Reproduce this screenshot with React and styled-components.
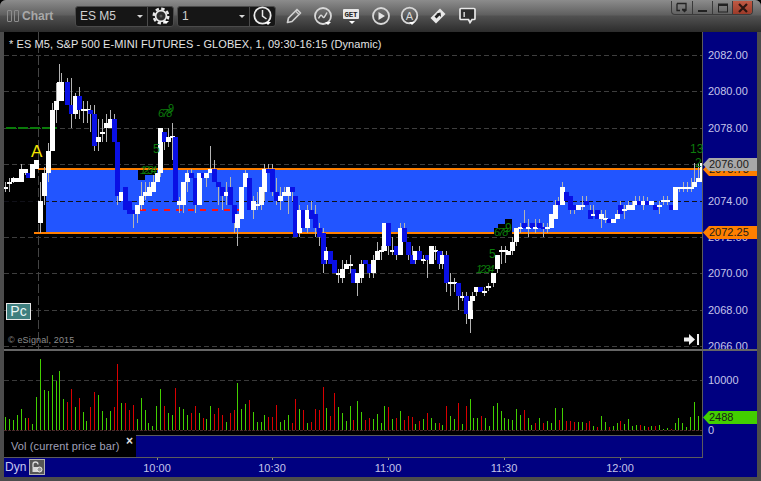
import React from "react";
import styled, { createGlobalStyle } from "styled-components";

const Global = createGlobalStyle`
  html, body { margin: 0; padding: 0; background: #000; }
  * { box-sizing: border-box; }
  body { font-family: "Liberation Sans", Arial, sans-serif; }
`;

const NAVY = "#000080";
const AXIS_TEXT = "#c4c4ea";

const Window = styled.div`
  width: 761px; height: 481px; display: flex; flex-direction: column;
  background: #4c4c4c; border-radius: 6px 6px 0 0; overflow: hidden;
`;
const TitleBar = styled.div`
  height: 32px; flex: none; display: flex; align-items: center; padding-left: 7px;
  background: linear-gradient(to bottom, #8c8c8c 0, #5f5f5f 15px, #515151 16px, #2c2c2c 32px);
`;
const Grip = styled.div`
  display: flex; gap: 2px; margin-right: 3px;
`;
const GripBar = styled.span`
  width: 5px; height: 12px; border: 1px solid #8d8d8d; border-radius: 1px; display: block;
`;
const AppName = styled.div`
  color: #a8a8a8; font-size: 12px; font-weight: bold; width: 53px;
`;
const ComboGroup = styled.div`
  display: flex; height: 21px; margin-right: 3px; background: #161616;
  border: 1px solid #4b4b4b; border-radius: 3px; align-items: stretch;
`;
const Combo = styled.div`
  width: 72px; display: flex; align-items: center; justify-content: space-between;
  padding: 0 4px 0 4px; color: #d0d0d0; font-size: 12px; border-right: 1px solid #4b4b4b;
`;
const ComboCaret = styled.span`
  width: 0; height: 0; border-left: 3px solid transparent; border-right: 3px solid transparent;
  border-top: 3px solid #d8d8d8;
`;
const ComboButton = styled.div`
  width: 25px; display: flex; align-items: center; justify-content: center;
`;
const ToolRow = styled.div`
  display: flex; align-items: center;
`;
const Tool = styled.div`
  width: 29px; height: 24px; display: flex; align-items: center; justify-content: center;
`;
const WindowControls = styled.div`
  display: flex; margin-left: auto; margin-right: 8px; align-self: flex-start; margin-top: 1px;
  height: 14px; border: 1px solid #3a3a3a; border-top: none; border-radius: 0 0 4px 4px; overflow: hidden;
`;
const WinButton = styled.div`
  width: 20px; display: flex; align-items: center; justify-content: center;
  border-left: ${(p) => (p.$first ? "none" : "1px solid #3a3a3a")};
  background: ${(p) => (p.$close ? "linear-gradient(#c05a44, #9c3b2a)" : "transparent")};
`;
const Main = styled.div`
  flex: 1; margin: 0 4px 4px; display: flex; flex-direction: column; min-height: 0;
`;
const PaneRow = styled.div`
  display: flex; height: ${(p) => p.$h}px; flex: none;
`;
const Plot = styled.div`
  width: 699px; position: relative; background: #000; border-right: 1px solid #5c5c5c;
  svg { display: block; position: absolute; left: 0; top: 0; }
`;
const Axis = styled.div`
  flex: 1; background: ${NAVY}; position: relative; overflow: hidden;
`;
const AxisLabel = styled.div`
  position: absolute; left: 5px; transform: translateY(-50%);
  color: ${AXIS_TEXT}; font-size: 11px; line-height: 13px;
`;
const Tag = styled.div`
  position: absolute; left: 0; right: 0; height: 13px; padding-left: 6px;
  background: ${(p) => p.$bg}; color: #1a1a1a; font-size: 11px; line-height: 13px;
  clip-path: polygon(0 50%, 6px 0, 100% 0, 100% 100%, 6px 100%);
`;
const Divider = styled.div`
  height: 2px; flex: none; background: #666;
`;
const Title = styled.div`
  position: absolute; left: 5px; top: 6px; color: #e4e4e4; font-size: 11px; line-height: 13px;
  white-space: nowrap; letter-spacing: 0.08px;
`;
const PcBadge = styled.div`
  position: absolute; left: 2px; top: 271px; width: 25px; height: 17px;
  background: #3f7f7f; border: 1px solid #e8e8e8; color: #eaf6f6; font-size: 14px;
  line-height: 15px; text-align: center;
`;
const Copyright = styled.div`
  position: absolute; left: 4px; top: 302px; color: #8c8c8c; font-size: 9px; line-height: 12px; letter-spacing: 0.15px;
`;
const LegendRow = styled.div`
  display: flex; height: 22px; flex: none; background: ${NAVY};
`;
const LegendTab = styled.div`
  width: 132px; background: #000; color: #a0a0b8; font-size: 11px; letter-spacing: 0.12px; display: flex;
  align-items: center; padding: 0 0 0 7px; position: relative; white-space: nowrap;
`;
const LegendClose = styled.span`
  position: absolute; left: 122px; top: 0; color: #e0e0e0; font-size: 12px; font-weight: bold; line-height: 12px;
`;
const LegendFill = styled.div`
  width: 567px; border-top: 1px solid #5c5c5c; border-right: 1px solid #5c5c5c;
`;
const TimeRow = styled.div`
  height: 20px; flex: none; background: ${NAVY}; display: flex; align-items: center; position: relative;
`;
const TimeRule = styled.div`
  position: absolute; left: 0; top: 0; width: 699px; height: 1px; background: #5c5c5c;
`;
const Dyn = styled.div`
  color: #c8c8f0; font-size: 12px; font-weight: normal; margin-left: 1px; width: 24px;
`;
const LockBox = styled.div`
  width: 16px; height: 16px; border: 1px solid #b0b0b0; background: #555;
  display: flex; align-items: center; justify-content: center;
`;
const TimeLabel = styled.div`
  position: absolute; top: 5px; transform: translateX(-50%); color: ${AXIS_TEXT}; font-size: 11px; line-height: 13px;
`;
const TimeTick = styled.div`
  position: absolute; top: 1px; width: 1px; height: 2px; background: #8a8a8a;
`;

// Drawn price data: [x, wickTop, bodyTop, bodyBottom, wickBottom, up?], read off 3x crops
const seg1 = [
  [17,365,380,386,395,1],[29,355,365,372,395,1],[41,352,353,365,368,1],[52,353,353,365,365,1],[64,312,327,365,365,1],[76,327,327,338,345,1],[84,338,338,353,353,0],[97,312,312,353,353,1],[109,300,300,327,327,1],
  [121,366,423,489,520,1],[133,320,339,408,435,1],[145,250,273,339,365,1],[157,130,150,273,273,1],[169,70,123,150,190,1],[178,12,66,123,123,1],[184,40,66,123,123,1],
  [203,55,66,135,135,0],[214,55,135,162,203,0],[226,100,108,162,177,1],[238,82,108,150,177,0],[250,123,147,153,190,1],[261,123,147,153,190,1],[271,135,150,162,215,0],
  [284,135,162,258,272,0],[296,177,231,246,272,1],[307,177,215,221,246,1],[319,163,190,204,246,1],[331,150,177,204,204,1],[344,163,177,246,246,0],[352,246,246,408,435,0],[364,396,396,423,423,1],
  [376,381,381,450,450,0],[388,423,423,462,462,0],[400,450,450,462,503,0],[412,435,435,462,489,1],[424,366,408,435,450,1],[436,366,396,408,420,1],[448,366,381,408,408,1],[460,345,366,396,396,1],[472,339,339,366,366,1],
  [482,204,204,339,350,1],[494,217,217,246,270,0],[506,204,231,246,260,1],[518,190,228,234,300,1],[526,231,231,423,423,0],[538,410,423,435,460,1],[550,366,366,435,460,1],[562,330,339,366,395,1],[574,327,339,354,354,0],
  [586,354,354,435,460,0],[598,339,339,435,435,1],[610,339,339,354,354,0],[620,339,339,354,380,1],[631,258,327,339,339,1],[643,300,327,366,366,0],[655,366,366,381,435,0],[667,381,381,408,450,0],[678,366,396,408,435,1],
  [691,352,381,435,435,0],[703,435,435,489,519,0],[712,462,462,503,558,1],[724,381,381,476,476,1],[736,330,339,381,381,1],
].map((c) => ({ o: [0, 60], c }));
const seg2 = [
  [58,120,84,180,180,0],[70,138,153,180,207,1],[82,126,162,168,180,1],[94,111,111,165,180,1],[103,42,57,126,153,1],[115,42,57,69,69,0],[127,42,57,126,138,0],[139,84,126,153,165,0],[151,111,138,153,180,1],[163,111,126,138,138,1],
  [175,111,111,138,192,1],[187,111,111,126,153,0],[196,138,138,261,261,0],[208,165,180,249,261,1],[220,180,180,234,234,0],[232,165,180,234,249,1],[244,153,180,207,207,0],[256,165,192,234,261,0],[268,219,234,261,288,0],
  [280,234,249,342,369,0],[288,290,303,330,342,1],[301,303,303,342,342,0],[313,330,330,369,369,0],[325,357,369,375,399,1],[337,330,357,384,399,1],[349,330,342,357,357,1],[361,315,342,348,369,1],[370,357,357,399,399,0],
  [382,369,369,399,438,1],[394,330,342,384,399,1],[406,330,330,342,342,0],[418,342,342,369,384,0],[430,315,330,369,384,1],[442,276,303,330,330,1],[454,288,300,306,330,1],[463,219,219,303,303,1],[475,219,219,288,315,0],
  [487,261,300,306,315,1],[499,288,288,315,330,0],[511,219,234,315,315,1],[523,219,234,276,276,0],[535,276,276,315,330,0],[547,288,315,342,342,0],[556,303,303,330,342,1],[568,288,303,330,330,0],[580,315,327,333,342,1],
  [592,315,315,330,384,0],[604,288,288,342,342,1],[616,288,300,306,330,1],[628,303,303,342,357,0],[637,303,315,342,357,1],[649,303,315,399,426,0],[661,369,396,402,438,1],[673,384,396,402,426,1],[685,399,399,438,480,0],
  [697,426,438,444,453,1],[709,426,438,492,522,0],[721,453,453,507,549,1],
].map((c) => ({ o: [230, 150], c }));
const seg3 = [
  [8,487,498,513,540,1],[20,472,472,487,498,1],[32,472,472,487,487,0],[44,472,482,488,498,1],[56,460,469,475,484,1],[70,430,430,460,470,1],[82,375,375,417,430,1],[94,348,361,367,402,1],[106,348,361,367,400,1],[114,364,364,376,376,1],
  [126,322,337,364,375,1],[138,295,295,337,348,1],[150,280,292,298,310,1],[162,240,280,295,295,0],[174,267,292,298,322,1],[186,280,280,295,295,0],[196,267,292,298,310,1],[208,267,280,295,295,0],[220,280,292,298,320,0],[232,280,292,298,310,1],
  [244,252,252,295,295,1],[256,210,225,267,267,1],[264,200,212,225,225,0],[276,156,171,225,225,1],[289,186,186,212,212,0],[301,198,198,240,252,0],[313,225,225,240,252,0],[325,225,225,240,240,1],[337,198,225,231,240,1],[349,198,212,225,225,0],
  [361,225,240,267,267,0],[369,225,252,258,258,1],[382,240,240,267,267,0],[394,240,252,267,294,1],[406,240,264,270,280,1],[418,267,267,279,279,0],[430,267,267,279,279,1],[442,240,252,267,267,1],[451,212,225,252,252,0],
  [463,225,237,243,267,1],[475,212,225,240,240,1],[487,212,225,240,240,1],[497,198,212,225,225,1],[509,198,212,225,225,0],[521,198,212,225,240,1],[533,200,212,225,225,0],[545,212,212,225,225,1],[557,225,225,240,240,0],
  [569,212,225,231,252,1],[581,198,209,215,225,1],[593,198,209,215,225,1],[604,225,225,240,240,0],[616,171,171,240,240,1],[628,171,172,178,185,1],[640,156,172,178,185,1],[652,156,172,178,185,1],[664,145,172,178,185,1],
  [674,100,156,171,171,1],[686,100,145,156,156,1],
].map((c) => ({ o: [470, 130], c }));

const candles = [...seg1, ...seg2, ...seg3].map(({ o, c }) => ({
  x: Math.floor(o[0] + c[0] / 3),
  wt: Math.round(o[1] + c[1] / 3),
  bt: Math.round(o[1] + c[2] / 3),
  bb: Math.round(o[1] + c[3] / 3),
  wb: Math.round(o[1] + c[4] / 3),
  up: !!c[5],
}));
candles.push({ x: 701, wt: 163, bt: 163, bb: 182, wb: 182, up: true, narrow: true });

const G = "#42d000", R = "#d80000";
const vol = [
  ...[[16,232,1],[28,238,1],[40,240,1],[52,226,1],[64,208,1],[76,234,1],[85,234,0],[97,252,1],[109,172,1],[121,57,1],[133,150,1],[145,154,1],[157,105,1],[169,123,1],[178,94,1],[190,178,1],[202,186,0],[214,148,0],[226,200,1],[238,174,0],[250,216,1],[259,243,1],[271,201,0],[283,156,0],[295,165,1],[307,213,1],[319,234,1],[331,213,1],[343,201,0],[352,72,0],[364,189,1],[376,189,0],[388,210,0],[400,195,0],[412,237,1],[424,174,1],[436,210,1],[445,249,1],[457,258,1],[469,198,1],[481,148,1],[493,198,0],[505,219,1],[517,225,1],[526,144,0],[538,201,1],[550,207,1],[562,225,1],[574,219,0],[586,198,0],[598,219,1],[610,234,0],[619,237,1],[631,198,1],[643,222,0],[655,204,0],[667,225,0],[679,246,1],[691,219,0],[703,210,0],[712,129,1],[724,207,1],[736,192,1],[748,180,0]].map((v) => ({ x: Math.floor(v[0] / 3), y: Math.round(340 + v[1] / 3), g: v[2] })),
  ...[[10,216,1],[22,246,1],[34,246,1],[43,225,1],[55,231,0],[67,231,0],[79,195,0],[91,246,1],[103,240,1],[115,225,1],[127,249,0],[136,177,0],[148,207,1],[160,210,0],[172,249,1],[184,246,0],[196,207,0],[208,210,0],[220,141,0],[229,204,1],[241,228,0],[253,159,0],[265,201,1],[277,219,1],[289,243,1],[301,198,1],[310,240,0],[322,183,1],[334,216,1],[346,240,0],[358,234,0],[370,237,1],[382,222,1],[394,249,1],[403,198,1],[415,201,0],[427,237,1],[439,234,0],[451,213,1],[463,240,0],[475,228,0],[487,231,0],[496,252,1],[508,243,0],[520,237,1],[532,219,0],[544,234,1],[556,249,1],[568,249,0],[577,255,1],[589,198,0],[601,228,1],[613,237,1],[625,189,0],[637,252,1],[649,198,0],[661,177,1],[670,234,1],[682,234,1],[694,228,0],[706,234,1],[718,258,1],[730,198,1],[742,189,1],[754,213,1]].map((v) => ({ x: Math.floor(250 + v[0] / 3), y: Math.round(340 + v[1] / 3), g: v[2] })),
  ...[[13,294,1],[25,298,1],[37,300,1],[49,267,1],[61,285,1],[73,270,0],[85,294,1],[94,315,1],[106,309,0],[118,294,1],[130,309,0],[142,303,1],[154,309,1],[166,264,1],[178,300,0],[187,264,1],[199,303,0],[211,303,0],[223,306,0],[235,306,1],[247,306,1],[259,309,0],[268,303,0],[280,318,1],[292,321,0],[304,288,1],[316,306,1],[328,321,0],[340,318,1],[352,309,1],[361,303,0],[373,312,1],[385,297,1],[397,318,1],[409,315,1],[421,315,0],[433,318,1],[445,321,0],[454,318,1],[466,318,0],[478,315,1],[490,327,1],[502,324,1],[514,327,0],[526,309,1],[535,294,1],[547,309,1],[559,321,1],[571,291,1],[583,246,1],[595,288,1]].map((v) => ({ x: Math.floor(500 + v[0] / 3), y: Math.round(320 + v[1] / 3), g: v[2] })),
];

const priceY = (p) => 55 + (2082 - p) * 18.2;
const grid = [2082, 2080, 2078, 2076, 2074, 2072, 2070, 2068, 2066];

function PriceChart() {
  return (
    <svg width="699" height="317" viewBox="4 32 699 317" shapeRendering="crispEdges">
      <rect x="46" y="170" width="656" height="62" fill="#2255ff" />
      {grid.map((p) => (
        <line key={p} x1="4" x2="702" y1={Math.round(priceY(p)) + 0.5} y2={Math.round(priceY(p)) + 0.5} stroke={p === 2074 ? "#101018" : "#3e3e3e"} strokeDasharray="5 3" />
      ))}
      <line x1="38.5" x2="38.5" y1="32" y2="349" stroke="#444" strokeDasharray="9 3" />
      <rect x="38" y="168" width="664" height="2" fill="#ff7f00" />
      <rect x="34" y="232" width="668" height="2" fill="#ff7f00" />
      <line x1="6" x2="57" y1="128" y2="128" stroke="#0a7a0a" strokeWidth="2" strokeDasharray="10 2" />
      <line x1="140" x2="239" y1="210" y2="210" stroke="#ff1010" strokeWidth="2" strokeDasharray="6 6" />
      <rect x="138" y="170" width="7" height="10" fill="#000" />
      <rect x="145" y="170" width="12" height="5" fill="#000" />
      <rect x="494" y="228" width="4" height="9" fill="#000" />
      <rect x="498" y="224" width="7" height="13" fill="#000" />
      <rect x="505" y="219" width="7" height="18" fill="#000" />
      {candles.map((c, i) => (
        <g key={i}>
          <rect x={c.x} y={c.wt} width="1" height={Math.max(c.wb - c.wt, 1)} fill="#b4b4b4" />
          <rect x={c.narrow ? c.x - 1 : c.x - 2} y={c.bt} width={c.narrow ? 2 : 5} height={Math.max(c.bb - c.bt, 2)} fill={c.up ? "#fff" : "#0a10e4"} />
        </g>
      ))}
      <g fontFamily="'Liberation Sans', Arial, sans-serif" fontSize="11" fill="#0c7c0c" shapeRendering="auto">
        <text x="158" y="117" fontStyle="italic" letterSpacing="-2">678</text>
        <text x="168" y="112">9</text>
        <text x="153" y="153" fontSize="12">5</text>
        <text x="140" y="174" fontStyle="italic" letterSpacing="-2.5">1234</text>
        <text x="494" y="236" fontStyle="italic" letterSpacing="-2">678</text>
        <text x="505" y="232" fontSize="12">9</text>
        <text x="489" y="258" fontSize="12">5</text>
        <text x="476" y="273" fontStyle="italic" letterSpacing="-2">1234</text>
        <text x="690" y="153" fontSize="12">13</text>
        <text x="695" y="167" fontSize="12">2</text>
      </g>
      <text x="31" y="157" fontFamily="'Liberation Sans', Arial, sans-serif" fontSize="17" fill="#f4e400" shapeRendering="auto">A</text>
      <g fill="#f0f0f0">
        <rect x="697" y="334" width="2" height="11" />
        <path d="M684 337.5h5V334l6 5.5-6 5.5v-3.5h-5z" shapeRendering="auto" />
      </g>
    </svg>
  );
}

function VolumeChart() {
  return (
    <svg width="699" height="84" viewBox="4 351 699 84" shapeRendering="crispEdges">
      <line x1="4" x2="702" y1="380.5" y2="380.5" stroke="#3a3a3a" strokeDasharray="5 3" />
      {vol.map((v, i) => (
        <rect key={i} x={v.x} y={v.y} width="1" height={430 - v.y} fill={v.g ? G : R} />
      ))}
      <line x1="4" x2="702" y1="430.5" y2="430.5" stroke="#4a2a2a" strokeDasharray="3 1" />
    </svg>
  );
}

const Caret = ({ x = 11, y = 16 }) => <path d={`M${x} ${y}h6l-3 3z`} fill="#fff" />;

const IconSvg = styled.svg`
  display: block; overflow: visible;
`;

const GearIcon = () => (
  <IconSvg width="20" height="20" viewBox="0 0 20 20">
    <circle cx="10" cy="10" r="7.300" fill="none" stroke="#e8e8e8" strokeWidth="2.400" strokeDasharray="3.400 2.330" />
    <circle cx="10" cy="10" r="5.400" fill="#2a2a2a" stroke="#e8e8e8" strokeWidth="1.700" />
    <circle cx="10" cy="10" r="1.500" fill="#555" />
    <Caret x={12} y={15} />
  </IconSvg>
);
const ClockIcon = () => (
  <IconSvg width="22" height="22" viewBox="0 0 22 22">
    <circle cx="10.5" cy="10.5" r="8.2" fill="#222" stroke="#eaeaea" strokeWidth="1.8" />
    <path d="M10.5 5v6l4 3" fill="none" stroke="#eaeaea" strokeWidth="1.5" />
    <Caret x={13} y={17} />
  </IconSvg>
);
const PencilIcon = () => (
  <IconSvg width="20" height="20" viewBox="0 0 20 20">
    <path d="M3.5 16.5l1-4.5 8.5-8.5 3.5 3.5-8.5 8.5z" fill="none" stroke="#cfcfcf" strokeWidth="1.7" strokeLinejoin="round" />
    <path d="M11.5 5l3.5 3.5" stroke="#cfcfcf" strokeWidth="1.2" />
  </IconSvg>
);
const WaveIcon = () => (
  <IconSvg width="22" height="22" viewBox="0 0 22 22">
    <circle cx="11" cy="11" r="8" fill="none" stroke="#d8d8d8" strokeWidth="1.8" />
    <path d="M6.5 13.5c2-4 3-4 4-2s2 1 4.500-4" fill="none" stroke="#d8d8d8" strokeWidth="1.5" />
    <Caret x={13} y={17} />
  </IconSvg>
);
const GetSvgText = styled.text`
  font-family: "Liberation Mono", monospace; font-size: 7.500px; font-weight: bold; fill: #222;
`;
const GetIcon = () => (
  <IconSvg width="22" height="20" viewBox="0 0 22 20">
    <rect x="2" y="3" width="16" height="10" rx="1" fill="#e8e8e8" />
    <GetSvgText x="3.500" y="10.500" textLength="13">GET</GetSvgText>
    <Caret x={8} y={15} />
  </IconSvg>
);
const PlayIcon = () => (
  <IconSvg width="22" height="22" viewBox="0 0 22 22">
    <circle cx="11" cy="11" r="8" fill="none" stroke="#d8d8d8" strokeWidth="1.8" />
    <path d="M8.500 7v8l6.500-4z" fill="#e4e4e4" />
  </IconSvg>
);
const AlertText = styled.text`
  font-family: "Liberation Sans", sans-serif; font-size: 11px; fill: #d8d8d8;
`;
const AlertIcon = () => (
  <IconSvg width="22" height="22" viewBox="0 0 22 22">
    <circle cx="10.500" cy="10.500" r="7.800" fill="none" stroke="#d8d8d8" strokeWidth="1.8" />
    <AlertText x="6.700" y="14.500">A</AlertText>
    <Caret x={10} y={17} />
  </IconSvg>
);
const SwapIcon = () => (
  <IconSvg width="22" height="22" viewBox="0 0 22 22">
    <path d="M2.500 13l9.500-9.500 5.500 5.500-9.500 9.500z" fill="#e8e8e8" />
    <path d="M8 8.500l4.500-1 .5 4.500-1.500-1.500-3 3-2-2 3-3z" fill="#222" />
  </IconSvg>
);
const NoteIcon = () => (
  <IconSvg width="20" height="20" viewBox="0 0 20 20">
    <path d="M3 2.500h13a1 1 0 0 1 1 1v9a1 1 0 0 1-1 1h-2l-2 3-1.500-3H3a1 1 0 0 1-1-1v-9a1 1 0 0 1 1-1z" fill="#2c2c2c" stroke="#e8e8e8" strokeWidth="1.700" />
    <rect x="5.500" y="6" width="1.300" height="5" fill="#e8e8e8" />
  </IconSvg>
);
const LockIcon = () => (
  <IconSvg width="12" height="12" viewBox="0 0 12 12">
    <path d="M2 6V3.500a2.500 2.500 0 0 1 5 0" fill="none" stroke="#d8d8d8" strokeWidth="1.300" />
    <rect x="1.500" y="6" width="6" height="5" fill="#d8d8d8" />
    <circle cx="8.500" cy="8.500" r="2.500" fill="#999" stroke="#eee" />
  </IconSvg>
);

const priceLabels = [2082, 2080, 2078, 2076, 2074, 2072, 2070, 2068, 2066];
const times = [["10:00", 153], ["10:30", 268], ["11:00", 384], ["11:30", 500], ["12:00", 616]];

export default function App() {
  return (
    <Window>
      <Global />
      <TitleBar>
        <Grip><GripBar /><GripBar /></Grip>
        <AppName>Chart</AppName>
        <ComboGroup>
          <Combo>ES M5<ComboCaret /></Combo>
          <ComboButton><GearIcon /></ComboButton>
        </ComboGroup>
        <ComboGroup>
          <Combo>1<ComboCaret /></Combo>
          <ComboButton><ClockIcon /></ComboButton>
        </ComboGroup>
        <ToolRow>
          <Tool><PencilIcon /></Tool>
          <Tool><WaveIcon /></Tool>
          <Tool><GetIcon /></Tool>
          <Tool><PlayIcon /></Tool>
          <Tool><AlertIcon /></Tool>
          <Tool><SwapIcon /></Tool>
          <Tool><NoteIcon /></Tool>
        </ToolRow>
        <WindowControls>
          <WinButton $first>
            <svg width="14" height="11" viewBox="0 0 14 11"><path d="M2 1.500h9v6h-4M2 1.500v7h3" fill="none" stroke="#222" strokeWidth="1.300" /><path d="M7 8h5l-2.500 2.500z" fill="#222" /></svg>
          </WinButton>
          <WinButton>
            <svg width="12" height="10" viewBox="0 0 12 10"><rect x="1" y="7" width="9" height="2" fill="#222" /></svg>
          </WinButton>
          <WinButton>
            <svg width="12" height="10" viewBox="0 0 12 10"><rect x="1.500" y="1" width="9" height="8" fill="none" stroke="#222" /><rect x="1" y="1" width="10" height="2" fill="#222" /></svg>
          </WinButton>
          <WinButton $close>
            <svg width="12" height="10" viewBox="0 0 12 10"><path d="M2 1l8 8M10 1l-8 8" stroke="#2a1510" strokeWidth="2.200" /></svg>
          </WinButton>
        </WindowControls>
      </TitleBar>
      <Main>
        <PaneRow $h={317}>
          <Plot>
            <PriceChart />
            <Title>* ES M5, S&amp;P 500 E-MINI FUTURES - GLOBEX, 1, 09:30-16:15 (Dynamic)</Title>
            <PcBadge>Pc</PcBadge>
            <Copyright>© eSignal, 2015</Copyright>
          </Plot>
          <Axis>
            {priceLabels.map((p) => (
              <AxisLabel key={p} style={{ top: priceY(p) - 32 }}>{p}.00</AxisLabel>
            ))}
            <Tag $bg="#ff7f00" style={{ top: 131 }}>2075.75</Tag>
            <Tag $bg="#a8a8a8" style={{ top: 126 }}>2076.00</Tag>
            <Tag $bg="#ff7f00" style={{ top: 194 }}>2072.25</Tag>
          </Axis>
        </PaneRow>
        <Divider />
        <PaneRow $h={84}>
          <Plot><VolumeChart /></Plot>
          <Axis>
            <AxisLabel style={{ top: 29 }}>10000</AxisLabel>
            <AxisLabel style={{ top: 79 }}>0</AxisLabel>
            <Tag $bg="#42d000" style={{ top: 60 }}>2488</Tag>
          </Axis>
        </PaneRow>
        <LegendRow>
          <LegendTab>
            Vol (current price bar)
            <LegendClose>×</LegendClose>
          </LegendTab>
          <LegendFill />
        </LegendRow>
        <TimeRow>
          <TimeRule />
          <Dyn>Dyn</Dyn>
          <LockBox><LockIcon /></LockBox>
          {times.map(([t, x]) => (
            <React.Fragment key={t}>
              <TimeTick style={{ left: x }} />
              <TimeLabel style={{ left: x }}>{t}</TimeLabel>
            </React.Fragment>
          ))}
        </TimeRow>
      </Main>
    </Window>
  );
}
